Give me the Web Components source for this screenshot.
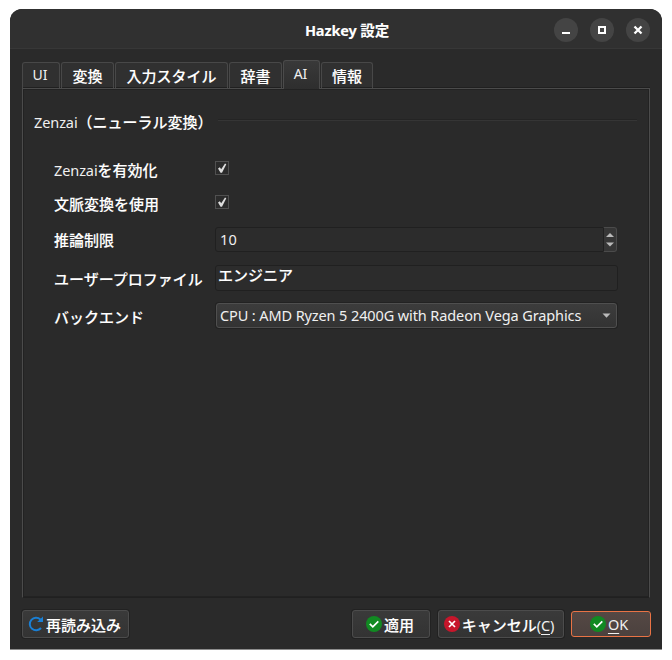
<!DOCTYPE html>
<html lang="ja">
<head>
<meta charset="utf-8">
<title>Hazkey 設定</title>
<style>
html,body{margin:0;background:#fff;height:660px;overflow:hidden}
body{font:500 15px/22px "Noto Sans","Noto Sans CJK JP",sans-serif;color:#fff;padding:9px 10px;box-sizing:border-box;-webkit-text-stroke:.1px #fff}
</style>
</head>
<body>
<settings-window heading="設定" app="Hazkey">
  <tab-bar slot="tabs">
    <tab-item style="width:38px" latin><latin-text style="--fs:14px">UI</latin-text></tab-item>
    <tab-item style="width:53px">変換</tab-item>
    <tab-item style="width:113px">入力スタイル</tab-item>
    <tab-item style="width:53px">辞書</tab-item>
    <tab-item style="width:37px" active latin><latin-text style="--fs:14px">AI</latin-text></tab-item>
    <tab-item style="width:52px">情報</tab-item>
  </tab-bar>
  <group-title><latin-text>Zenzai</latin-text>（ニューラル変換）</group-title>
  <form-row style="height:34px"><span slot="label"><latin-text>Zenzai</latin-text>を有効化</span><check-box></check-box></form-row>
  <form-row style="height:34px"><span slot="label">文脈変換を使用</span><check-box></check-box></form-row>
  <form-row style="height:41px;--dy:1px"><span slot="label">推論制限</span><spin-box><latin-text style="--ls:.1px">10</latin-text></spin-box></form-row>
  <form-row style="height:36px;--dy:1px"><span slot="label">ユーザープロファイル</span><text-field>エンジニア</text-field></form-row>
  <form-row style="height:39px;--dy:.4px"><span slot="label">バックエンド</span><combo-box><latin-text style="--ls:-.11px">CPU : AMD Ryzen 5 2400G with Radeon Vega Graphics</latin-text></combo-box></form-row>
  <dialog-button slot="left" icon="reload" style="width:107px">再読み込み</dialog-button>
  <dialog-button slot="right" icon="ok" style="width:78px">適用</dialog-button>
  <dialog-button slot="right" icon="cancel" style="width:126px;padding-right:4px">キャンセル<latin-text>(<u>C</u>)</latin-text></dialog-button>
  <dialog-button slot="right" icon="ok" primary style="width:80px"><latin-text><u>O</u>K</latin-text></dialog-button>
</settings-window>
<script>
const define=(name,css,html)=>customElements.define(name,class extends HTMLElement{
  constructor(){
    super();
    this.attachShadow({mode:'open'}).innerHTML=`<style>*{box-sizing:border-box}${css}</style>${typeof html==='function'?html(this):html}`;
  }
});

define('latin-text',`
:host{font-family:"Noto Sans",sans-serif;font-weight:400;font-size:var(--fs,14.5px);letter-spacing:var(--ls,-.1px);line-height:1;white-space:pre;color:#f0f0f0;-webkit-text-stroke:0}
::slotted(u){text-underline-offset:3px;text-decoration-thickness:1px}`,'<slot></slot>');

define('window-button',`
:host{display:block;width:24px;height:24px;border-radius:50%;background:#444}
svg{display:block}`,el=>`<svg width="24" height="24" fill="none" stroke="#fff" stroke-width="2">${{
  min:'<path d="M8 15H16"/>',
  max:'<path d="M9 9H15V15H9Z"/>',
  close:'<path d="M8.5 8.5L15.5 15.5M15.5 8.5L8.5 15.5" stroke-width="2.3"/>'}[el.getAttribute('kind')]}</svg>`);

define('title-bar',`
:host{display:grid;grid-template-columns:1fr auto 1fr;align-items:center;height:40px;background:#303030;border-bottom:1px solid #373737;padding:3px 12px 0 34px;box-sizing:border-box}
.t{grid-column:2;font-weight:700;font-size:14.5px;line-height:20px;letter-spacing:-.13px;white-space:pre}
.b{display:flex;gap:12px;justify-content:flex-end}`,
el=>`<div class="t">${el.getAttribute('text')}</div><div class="b"><window-button kind="min"></window-button><window-button kind="max"></window-button><window-button kind="close"></window-button></div>`);

define('settings-window',`
:host{display:flex;flex-direction:column;width:652px;height:641px;box-sizing:border-box;background:#2a2a2a;border-radius:12px 12px 0 0;overflow:hidden;border-bottom:1px solid #8d8d8d}
.body{padding:11px 11px 11px 12px;display:flex;flex-direction:column;flex:1}
.pane{height:510px;margin:-1px 1px 0 0;border:1px solid #4b4b4b;border-bottom-color:#202020;box-shadow:inset 0 0 0 1px #222,0 -1px #202020;padding:20px 12px 0 11px}
.foot{display:flex;justify-content:space-between;align-items:center;margin-top:12px;height:28px}
.r{display:flex;gap:7px;align-items:center}
slot[name=right]::slotted(:nth-last-child(3)){margin-right:1px}`,
el=>`<title-bar text="${el.getAttribute('app')} ${el.getAttribute('heading')}"></title-bar>
<div class="body"><slot name="tabs"></slot><div class="pane"><slot></slot></div>
<div class="foot"><slot name="left"></slot><div class="r"><slot name="right"></slot></div></div></div>`);

define('tab-bar',`:host{display:flex;gap:1px;align-items:flex-end;height:29px;position:relative;z-index:1}`,'<slot></slot>');
define('tab-item',`
:host{display:flex;justify-content:center;box-sizing:border-box;height:26px;margin-bottom:1px;padding-top:1px;background:#303030;border:1px solid #484848;border-bottom:0;border-radius:3px 3px 0 0;line-height:24px;box-shadow:inset 0 -1px #202020;white-space:nowrap}
:host([latin]){padding:0 2px 0 0;line-height:22px}
:host([active]){height:29px;margin-bottom:0;padding-top:1px;background:linear-gradient(#393939,#2e2e2e);border-color:#4b4b4b;box-shadow:none}
div{height:22px}`,'<div><slot></slot></div>');

define('group-title',`
:host{display:flex;height:42px;align-items:flex-start;line-height:26px;white-space:nowrap}
.l{flex:1;height:2px;margin:10px 0 0 5px;border-top:1px solid #242424;border-bottom:1px solid #353535}`,'<div><slot></slot></div><div class="l"></div>');

define('form-row',`
:host{display:grid;grid-template-columns:161px 403px;align-items:center;padding-left:20px;box-sizing:border-box}
.n{padding-top:3px;margin-bottom:calc(var(--dy,0px)*2);white-space:nowrap}`,'<div class="n"><slot name="label"></slot></div><slot></slot>');

define('check-box',`
:host{display:block;width:14px;height:14px;box-sizing:border-box;border:1px solid #505050;background:#2b2b2b}
svg{display:block}`,'<svg width="12" height="12"><path d="M2 6.5L3.8 5.3L5.2 7.3L9 1.6L10.3 2.2L6 10.7H4.5Z" fill="#ddd"/></svg>');

const field='display:flex;box-sizing:border-box;border:1px solid #202020;border-radius:3px;background:#2c2c2c;width:403px;';
define('spin-box',`
:host{${field}width:402px;height:25px;padding-left:4px;align-items:center;justify-content:space-between}
.s{width:14px;height:25px;margin-right:-1px;background:#363636;border:1px solid #4b4b4b;border-left-color:#202020;border-radius:0 3px 3px 0}
svg{display:block}`,'<slot></slot><div class="s"><svg width="12" height="23"><path d="M2 9H10L6 5ZM2 14.5H10L6 18.5Z" fill="#bababa"/></svg></div>');
define('text-field',`:host{${field}height:26px;padding-left:2px;line-height:18px}`,'<slot></slot>');
define('combo-box',`
:host{${field}width:401px;margin-left:1px;height:25px;padding:0 5px 0 3px;align-items:center;justify-content:space-between;background:linear-gradient(#3c3c3c,#333);border-color:#4f4f4f;box-shadow:0 0 0 1px #222}`,
'<slot></slot><svg width="9" height="5"><path d="M0.5 0.5H8.5L4.5 4.7Z" fill="#bababa"/></svg>');

const disc=(c,p)=>`<svg width="16" height="16"><circle cx="8" cy="8" r="8" fill="${c}"/><path d="${p}" fill="none" stroke="#fff" stroke-width="1.7"/></svg>`;
const icons={
  ok:disc('#118a22','M3.8 7.9L6.8 10.8L12.3 5.4'),
  cancel:disc('#c7162b','M5 5L11 11M11 5L5 11'),
  reload:'<svg width="16" height="16"><path d="M12.4 3.4A6.3 6.3 0 1 0 13 12" fill="none" stroke="#1a7fd4" stroke-width="2"/><path d="M15 0.4V6H9.2Z" fill="#1a7fd4"/></svg>'};
define('dialog-button',`
:host{display:flex;box-sizing:border-box;height:28px;align-items:center;justify-content:center;gap:2px;padding-right:2px;border:1px solid #4c4c4c;border-radius:3px;background:linear-gradient(#3a3a3a,#333);box-shadow:0 0 0 1px #222;white-space:nowrap}
:host([primary]){height:26px;padding-right:4px;border-color:#e97345;background:linear-gradient(#554844,#4b413e);box-shadow:none}
span{padding-top:1px}:host([primary]) span{padding-bottom:1px;padding-top:0}
svg{display:block}`,el=>`${icons[el.getAttribute('icon')]}<span><slot></slot></span>`);
</script>
</body>
</html>
